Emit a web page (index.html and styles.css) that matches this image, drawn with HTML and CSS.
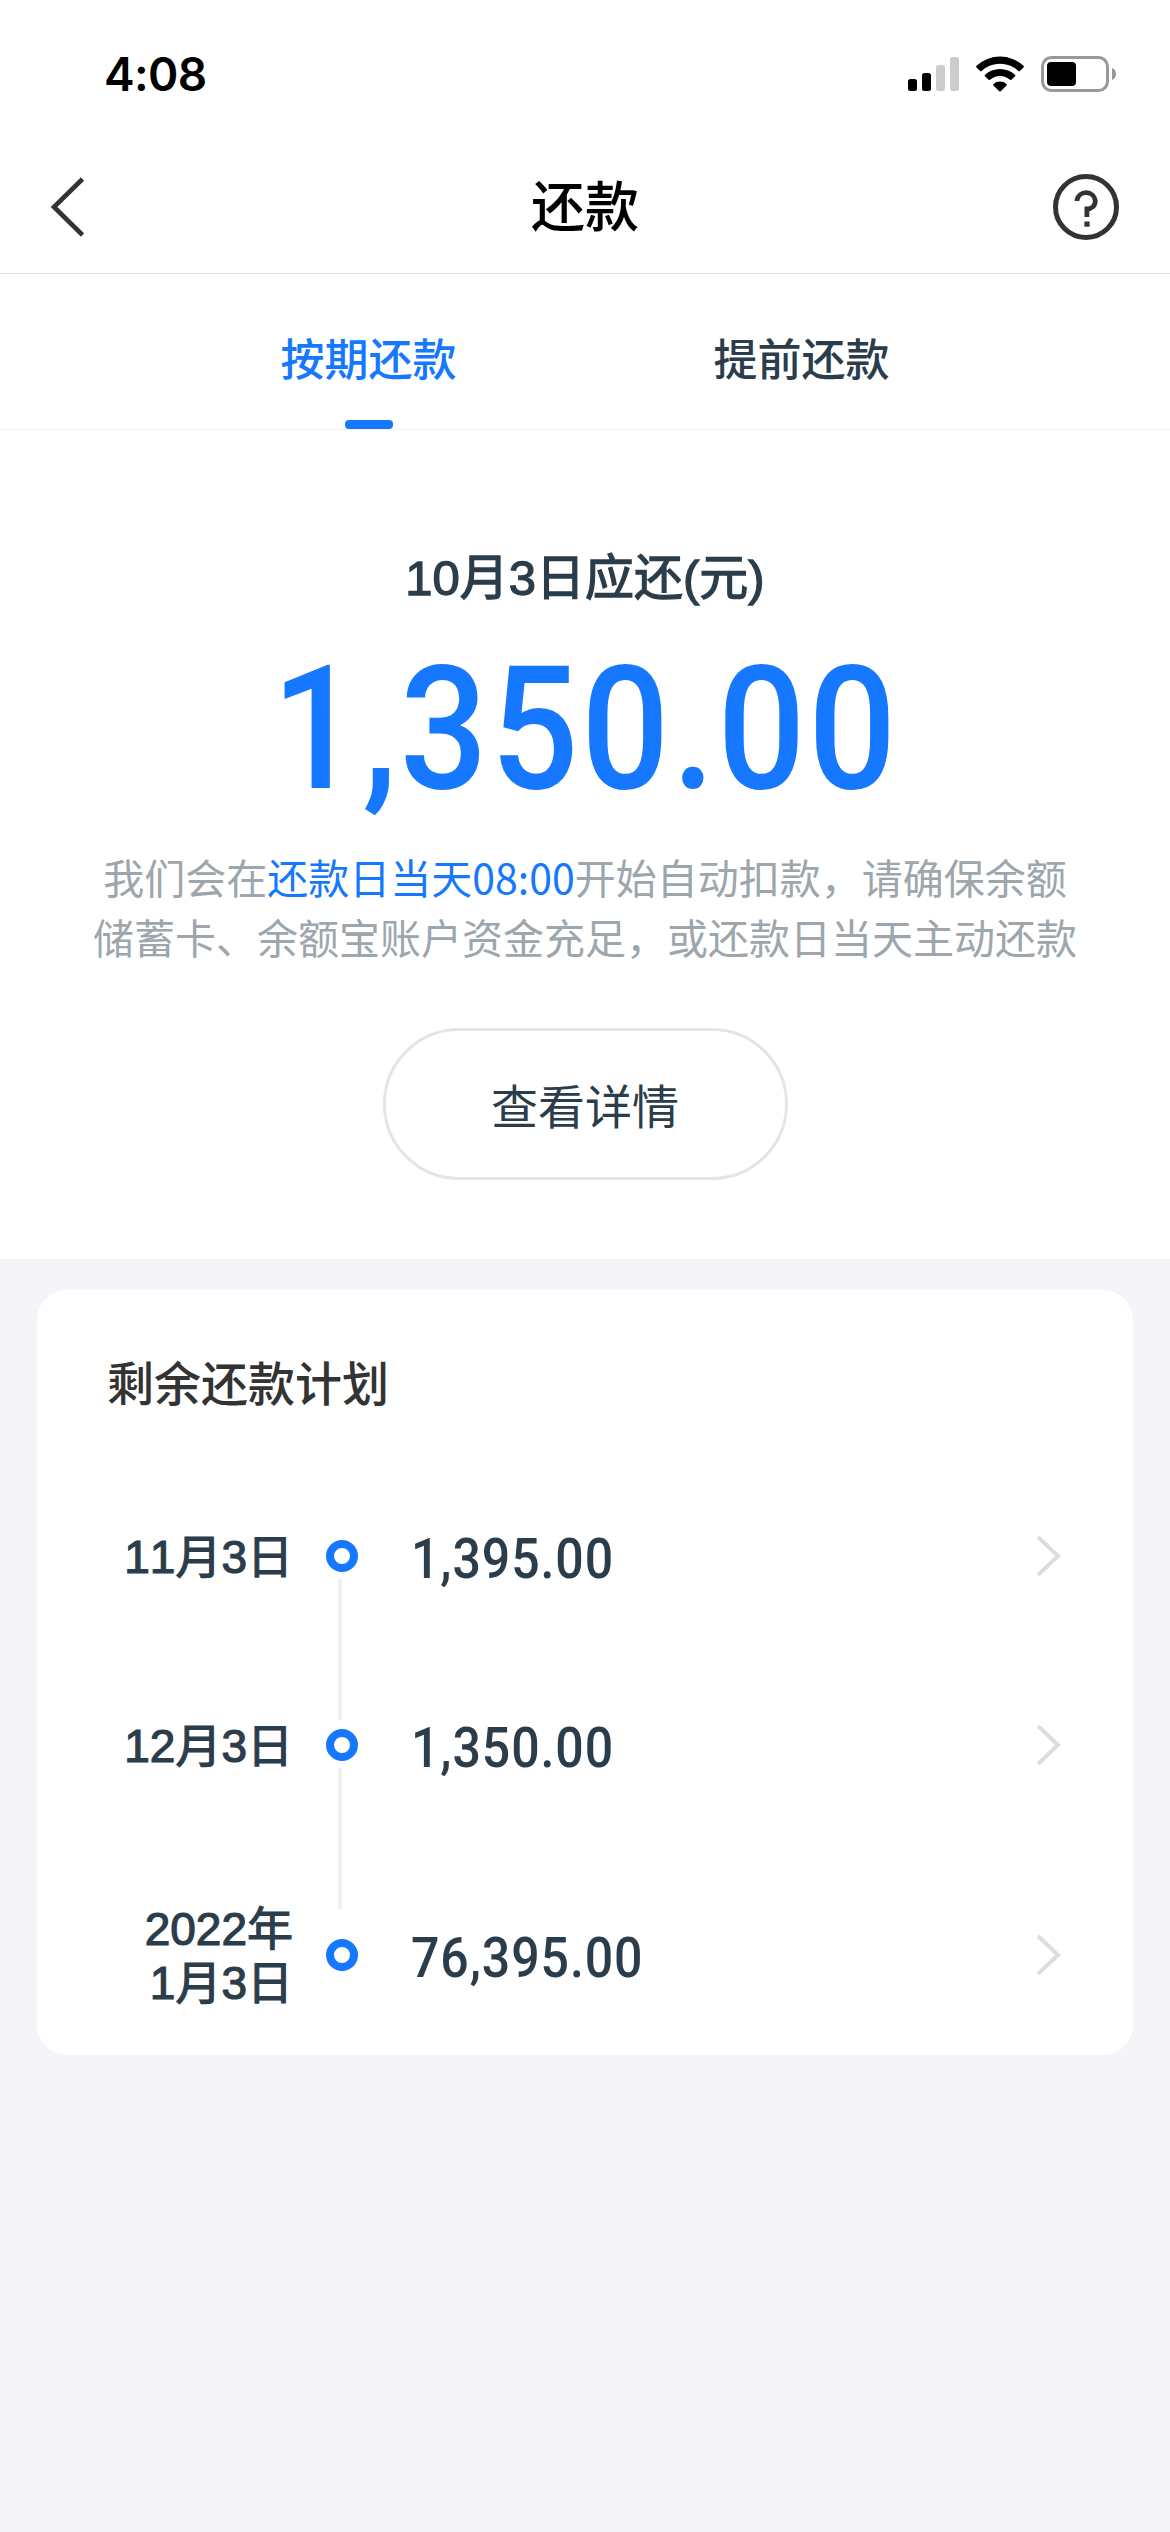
FILE: index.html
```html
<!DOCTYPE html>
<html lang="zh-CN">
<head>
    <meta charset="UTF-8">
    <meta name="viewport" content="width=device-width, initial-scale=1.0">
    <title>还款</title>
    <link rel="stylesheet" href="styles.css">
</head>
<body>
    <div class="status-bar">
        <span class="time">4:08</span>
        <div class="status-icons">
            <svg class="signal" width="52" height="36" viewBox="0 0 52 36">
                <rect x="0" y="23" width="9" height="12" rx="2.5"/>
                <rect x="14" y="17" width="9" height="18" rx="2.5"/>
                <rect x="28" y="9" width="9" height="26" rx="2.5" fill="#ccc"/>
                <rect x="42" y="1" width="9" height="34" rx="2.5" fill="#ccc"/>
            </svg>
            <svg class="wifi" width="48" height="36" viewBox="0 0 48 36">
                <path d="M0.5 9.8 A34.5 34.5 0 0 1 47.5 9.8 Q48.2 10.6 47.5 11.4 L43.8 15 Q43.1 15.6 42.3 14.9 A27 27 0 0 0 5.7 14.9 Q4.9 15.6 4.2 15 L0.5 11.4 Q-0.2 10.6 0.5 9.8Z"/>
                <path d="M9 18.8 A22 22 0 0 1 39 18.8 Q39.7 19.6 39 20.3 L35.4 23.8 Q34.7 24.4 34 23.8 A15 15 0 0 0 14 23.8 Q13.3 24.4 12.6 23.8 L9 20.3 Q8.3 19.6 9 18.8Z"/>
                <path d="M17.4 27.9 A10.5 10.5 0 0 1 30.6 27.9 Q31.3 28.7 30.6 29.4 L24.7 35.3 Q24 36 23.3 35.3 L17.4 29.4 Q16.7 28.7 17.4 27.9Z"/>
            </svg>
            <svg class="battery" width="75" height="36" viewBox="0 0 75 36">
                <rect x="1.5" y="1.5" width="65" height="33" rx="9" fill="none" stroke="#999" stroke-width="3"/>
                <rect x="6" y="6" width="29" height="24" rx="4"/>
                <path d="M71 12 A6.5 6.5 0 0 1 71 24Z" fill="#999"/>
            </svg>
        </div>
    </div>

    <header class="nav-bar">
        <svg width="70" height="70" viewBox="0 0 70 70">
            <path d="M33.5 7 L5 35 L33.5 63" fill="none" stroke="#333" stroke-width="4.6"/>
        </svg>
        <h1>还款</h1>
        <svg width="70" height="70" viewBox="0 0 70 70">
            <circle cx="35" cy="35" r="30.5" fill="none" stroke="#333" stroke-width="5"/>
            <path d="M26 29 V28 A9.3 9.3 0 0 1 44.3 28.5 C44.3 34 40.5 37 35.9 37 V45" fill="none" stroke="#333" stroke-width="4.8"/>
            <rect x="33.4" y="49.5" width="5.2" height="5.2" fill="#333"/>
        </svg>
    </header>

    <nav class="tabs">
        <div class="tab active">按期还款</div>
        <div class="tab">提前还款</div>
    </nav>

    <section class="summary">
        <div class="due-date">10月3日应还(元)</div>
        <div class="due-amount">1,350.00</div>
        <p class="notice">我们会在<span class="highlight">还款日当天08:00</span>开始自动扣款，请确保余额<br>储蓄卡、余额宝账户资金充足，或还款日当天主动还款</p>
        <button class="detail-button">查看详情</button>
    </section>

    <section class="plan">
        <h2>剩余还款计划</h2>
        <div class="plan-row">
            <div class="date">11月3日</div>
            <div class="rail"><i class="dot"></i><i class="line"></i></div>
            <div class="amount">1,395.00</div>
            <svg class="arrow" width="28" height="44" viewBox="0 0 28 44"><path d="M3 3 L23 22 L3 41"/></svg>
        </div>
        <div class="plan-row second">
            <div class="date">12月3日</div>
            <div class="rail"><i class="dot"></i><i class="line"></i></div>
            <div class="amount">1,350.00</div>
            <svg class="arrow" width="28" height="44" viewBox="0 0 28 44"><path d="M3 3 L23 22 L3 41"/></svg>
        </div>
        <div class="plan-row">
            <div class="date">2022年<br>1月3日</div>
            <div class="rail"><i class="dot"></i></div>
            <div class="amount">76,395.00</div>
            <svg class="arrow" width="28" height="44" viewBox="0 0 28 44"><path d="M3 3 L23 22 L3 41"/></svg>
        </div>
    </section>
</body>
</html>
```
FILE: styles.css
```css
* {
    margin: 0;
    padding: 0;
    box-sizing: border-box;
}

body {
    font-family: 'Noto Sans CJK SC', sans-serif;
    background: #f4f4f9;
    min-height: 100vh;
    color: #2b3d4b;
}

.status-bar {
    height: 140px;
    padding: 43px 54px 0 104px;
    background: #fff;
    display: flex;
    justify-content: space-between;
    align-items: flex-start;
    color: #000;
}

.time {
    font-family: Inter, sans-serif;
    font-size: 46px;
    font-weight: 600;
    line-height: 62px;
    letter-spacing: -0.6px;
}

.status-icons {
    display: flex;
    margin-top: 13px;
}

.wifi {
    margin-left: 16px;
}

.battery {
    margin-left: 17px;
}

.nav-bar {
    height: 134px;
    padding: 0 49px;
    background: #fff;
    border-bottom: 1px solid #dedede;
    display: flex;
    justify-content: space-between;
    align-items: center;
}

.nav-bar h1 {
    margin-top: -5px;
    color: #000;
    font-size: 54px;
    font-weight: 500;
    line-height: 80px;
}

.tabs {
    height: 156px;
    padding: 0 152px;
    background: #fff;
    border-bottom: 1px solid #f0f0f0;
    display: flex;
}

.tab {
    flex: 1;
    padding-top: 51px;
    font-size: 44px;
    font-weight: 500;
    line-height: 64px;
    display: flex;
    flex-direction: column;
    align-items: center;
}

.tab.active {
    color: #1677ff;
}

.tab.active::after {
    content: '';
    width: 48px;
    height: 9px;
    margin-top: 31px;
    border-radius: 4px;
    background: #1677ff;
}

.summary {
    height: 829px;
    padding-top: 113px;
    background: #fff;
    display: flex;
    flex-direction: column;
    align-items: center;
    text-align: center;
}

.due-date {
    font-family: 'Liberation Sans', 'Noto Sans CJK SC', sans-serif;
    font-size: 49px;
    line-height: 70px;
    font-kerning: none;
    -webkit-text-stroke: 1.3px #2b3d4b;
}

/* narrow figures, close to DIN */
.due-amount {
    margin-top: 16px;
    color: #1677ff;
    font-family: Roboto, sans-serif;
    font-size: 172px;
    font-weight: 500;
    line-height: 200px;
    letter-spacing: 3px;
    font-kerning: none;
    transform: scaleX(0.9);
}

.notice {
    margin-top: 17px;
    color: #9da6ad;
    font-size: 41px;
    line-height: 60px;
}

.highlight {
    color: #1677ff;
}

.detail-button {
    width: 405px;
    height: 152px;
    margin-top: 62px;
    border: 3px solid #e5e5e5;
    border-radius: 76px;
    background: #fff;
    color: #2b3d4b;
    font-family: inherit;
    font-size: 47px;
    line-height: 70px;
}

.plan {
    height: 765px;
    margin: 31px 37px 0;
    padding: 56px 70px 0;
    border-radius: 30px;
    background: #fff;
}

.plan h2 {
    margin-bottom: 124px;
    color: #333;
    font-size: 47px;
    font-weight: 500;
    line-height: 70px;
}

.plan-row {
    height: 189px;
    display: grid;
    grid-template-columns: 186px 32px 1fr 28px;
    column-gap: 33px;
}

.plan-row.second {
    height: 210px;
}

.date,
.amount {
    height: 32px;
    display: flex;
    align-items: center;
}

.date {
    padding-top: 2px;
    justify-content: flex-end;
    text-align: right;
    white-space: nowrap;
    font-family: 'Liberation Sans', 'Noto Sans CJK SC', sans-serif;
    font-size: 46px;
    line-height: 54px;
    font-kerning: none;
    -webkit-text-stroke: 1.2px #2b3d4b;
}

.rail {
    display: flex;
    flex-direction: column;
}

.dot {
    width: 32px;
    height: 32px;
    border: 8px solid #1677ff;
    border-radius: 50%;
}

.line {
    width: 4px;
    height: 141px;
    margin: 7px 0 0 12px;
    background: #f0f0f1;
}

.amount {
    padding: 6px 0 0 20px;
    font-family: Roboto, sans-serif;
    font-size: 55px;
    font-weight: 500;
    letter-spacing: 1px;
    font-kerning: none;
    transform: scaleX(0.91);
    transform-origin: 20px 50%;
}

.arrow {
    margin-top: -6px;
}

.arrow path {
    fill: none;
    stroke: #dddde1;
    stroke-width: 4;
}
```
